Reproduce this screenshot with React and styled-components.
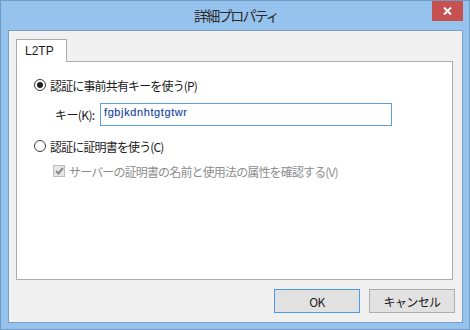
import styled, { createGlobalStyle } from "styled-components";

const GlobalStyle = createGlobalStyle`
  html, body {
    margin: 0;
    padding: 0;
    background: #ffffff;
  }
  body {
    font-family: "Noto Sans CJK JP", "Noto Sans", sans-serif;
    font-size: 12px;
  }
`;

const JP = `"Noto Sans CJK JP", "Noto Sans", sans-serif`;

const Window = styled.div`
  width: 470px;
  height: 330px;
  box-sizing: border-box;
  border: 1px solid #6f9ac6;
  background: #96c3ee;
  display: flex;
  flex-direction: column;
`;

const TitleBar = styled.div`
  height: 29px;
  display: grid;
  grid-template-columns: 1fr auto 1fr;
  align-items: start;
`;

const Title = styled.div`
  grid-column: 2;
  font-family: ${JP};
  font-size: 14px;
  letter-spacing: -1.9px;
  color: #2b2b2b;
  line-height: 29px;
  padding-left: 2px;
`;

const CloseButton = styled.div`
  grid-column: 3;
  justify-self: end;
  width: 31px;
  height: 20px;
  margin-right: 6px;
  background: #c75050;
  display: flex;
  align-items: center;
  justify-content: center;
`;

const Client = styled.div`
  flex: 1;
  margin: 0 6px 6px 7px;
  border: 1px solid #7b9ec5;
  background: #f0f0f0;
  display: flex;
  flex-direction: column;
  padding: 8px 7px 9px 7px;
`;

const TabStrip = styled.div`
  display: flex;
  margin-bottom: -1px;
  position: relative;
  z-index: 1;
`;

const Tab = styled.div`
  box-sizing: border-box;
  width: 51px;
  height: 23px;
  border: 1px solid #acacac;
  border-bottom: none;
  background: #ffffff;
  font-family: "Liberation Sans", ${JP};
  font-size: 12px;
  color: #1a1a1a;
  padding: 4px 0 0 8px;
`;

const Panel = styled.div`
  box-sizing: border-box;
  width: 437px;
  height: 219px;
  border: 1px solid #acacac;
  background: #ffffff;
  display: flex;
  flex-direction: column;
  padding: 16px 0 0 17px;
`;

const Option = styled.label`
  display: flex;
  align-items: center;
  height: 14px;
  margin-top: ${({ $top }) => $top || 0}px;
  margin-left: ${({ $indent }) => $indent || 0}px;
  font-family: ${JP};
  font-size: 12px;
  letter-spacing: -0.85px;
  color: ${({ $disabled }) => ($disabled ? "#8d8d8d" : "#1a1a1a")};
  white-space: nowrap;
`;

const Radio = styled.span`
  box-sizing: border-box;
  width: 12px;
  height: 12px;
  border-radius: 50%;
  border: 1px solid #3a3a3a;
  background: #ffffff;
  display: flex;
  align-items: center;
  justify-content: center;
  margin-right: 4px;
  &::after {
    content: "";
    width: 6px;
    height: 6px;
    border-radius: 50%;
    background: ${({ $checked }) => ($checked ? "#1f1f1f" : "transparent")};
  }
`;

const Check = styled.span`
  box-sizing: border-box;
  width: 12px;
  height: 12px;
  border: 1px solid #bcbcbc;
  background: #e6e6e6;
  display: flex;
  align-items: center;
  justify-content: center;
  margin-right: 4px;
`;

const KeyRow = styled.div`
  display: flex;
  align-items: center;
  margin: 11px 0 0 21px;
`;

const KeyLabel = styled.span`
  font-family: ${JP};
  font-size: 12px;
  letter-spacing: -0.6px;
  color: #1a1a1a;
  width: 45px;
`;

const KeyInput = styled.div`
  box-sizing: border-box;
  width: 292px;
  height: 23px;
  border: 1px solid #5a9fe6;
  background: #ffffff;
  padding: 2px 0 0 3px;
  font-family: "Liberation Sans", sans-serif;
  font-size: 11px;
  letter-spacing: 0.6px;
  color: #1d3f8f;
  text-shadow: 0 0 1px #b6d0ff;
`;

const ButtonRow = styled.div`
  display: flex;
  justify-content: flex-end;
  gap: 9px;
  margin-top: 9px;
`;

const Button = styled.div`
  box-sizing: border-box;
  width: 86px;
  height: 24px;
  border: 1px solid ${({ $primary }) => ($primary ? "#4a9ae8" : "#adadad")};
  background: #e1e1e1;
  display: flex;
  align-items: center;
  justify-content: center;
  font-family: ${JP};
  font-size: 12px;
  letter-spacing: -0.6px;
  color: #1a1a1a;
`;

export default function App() {
  return (
    <>
      <GlobalStyle />
      <Window>
        <TitleBar>
          <Title>詳細プロパティ</Title>
          <CloseButton>
            <svg width="9" height="8" viewBox="0 0 9 8">
              <path d="M1 0.5 L8 7.5 M8 0.5 L1 7.5" stroke="#ffffff" strokeWidth="2" />
            </svg>
          </CloseButton>
        </TitleBar>
        <Client>
          <TabStrip>
            <Tab>L2TP</Tab>
          </TabStrip>
          <Panel>
            <Option>
              <Radio $checked />
              認証に事前共有キーを使う(P)
            </Option>
            <KeyRow>
              <KeyLabel>キー(K):</KeyLabel>
              <KeyInput>fgbjkdnhtgtgtwr</KeyInput>
            </KeyRow>
            <Option $top={13}>
              <Radio />
              認証に証明書を使う(C)
            </Option>
            <Option $top={11} $indent={19} $disabled>
              <Check>
                <svg width="9" height="8" viewBox="0 0 9 8">
                  <path d="M1 4 L3.5 6.5 L8 1" stroke="#8a8a8a" strokeWidth="2" fill="none" />
                </svg>
              </Check>
              サーバーの証明書の名前と使用法の属性を確認する(V)
            </Option>
          </Panel>
          <ButtonRow>
            <Button $primary>OK</Button>
            <Button>キャンセル</Button>
          </ButtonRow>
        </Client>
      </Window>
    </>
  );
}
